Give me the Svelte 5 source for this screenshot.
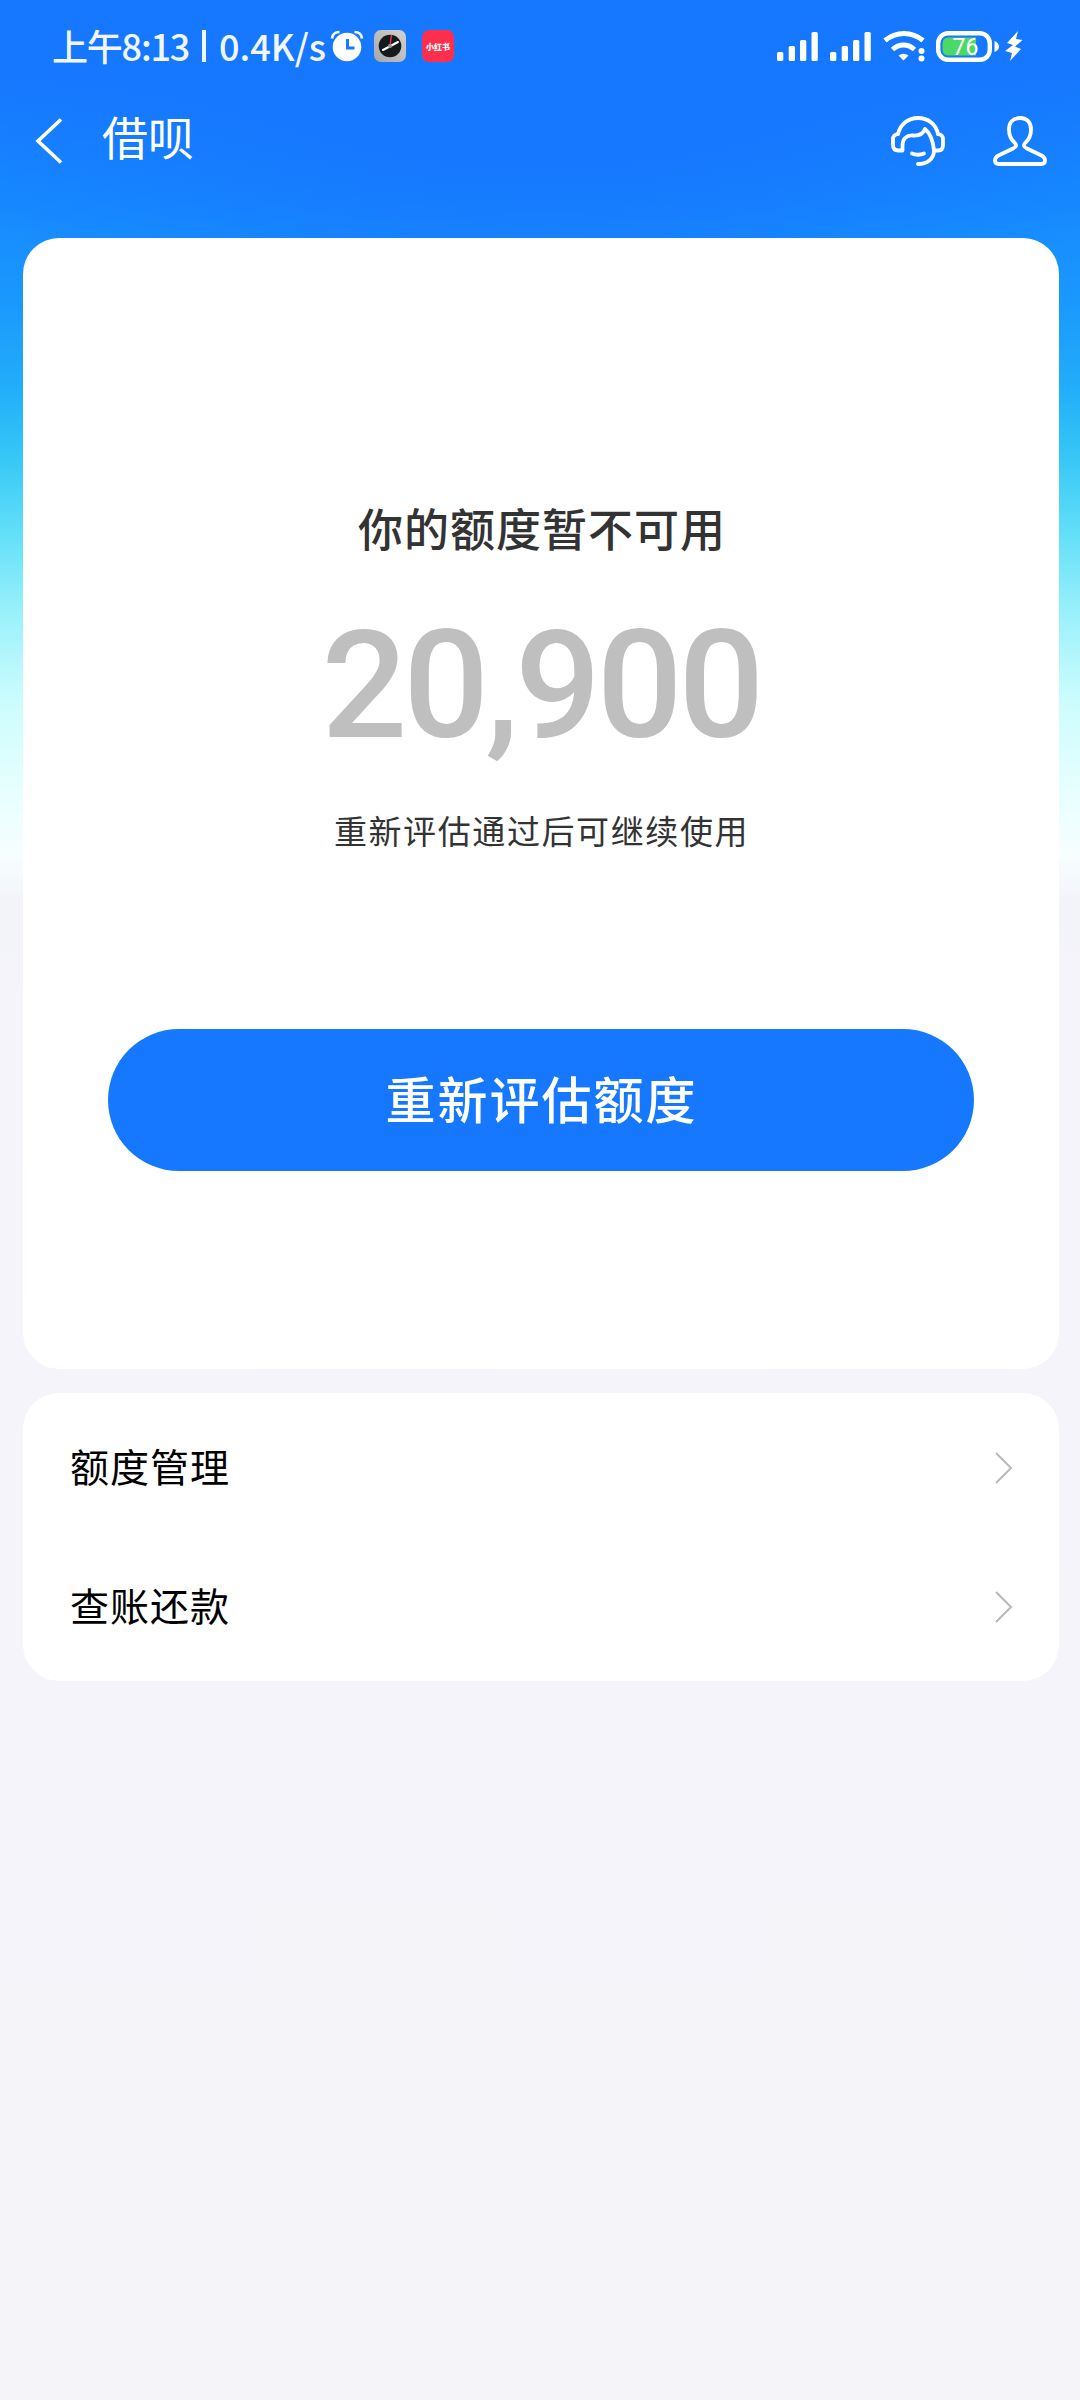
<script>
  const bars = [
    { x: 0, y: 20, h: 9 },
    { x: 11.7, y: 14, h: 15 },
    { x: 23, y: 8, h: 21 },
    { x: 34.5, y: 0, h: 29 }
  ];
  const rows = ['额度管理', '查账还款'];
</script>

<div class="screen">
  <div class="status">
    <span class="time">上午8:13</span>
    <span class="divider"></span>
    <span class="speed">0.4K/s</span>
    <svg class="alarm" width="34" height="32" viewBox="0 0 34 32">
      <circle cx="17" cy="17" r="14.3" fill="#fff" />
      <path d="M2 8.500C2.500 4 5.500 2 9.500 2M32 8.500C31.500 4 28.500 2 24.500 2" fill="none" stroke="#fff" stroke-width="2.600" />
      <path d="M17.500 9v9h7" fill="none" stroke="#1677ff" stroke-width="3" />
    </svg>
    <svg class="clock" width="32" height="32" viewBox="0 0 32 32">
      <defs>
        <linearGradient id="silver" x1="1" y1="0" x2="0" y2="1">
          <stop offset="0" stop-color="#d2d2d0" />
          <stop offset="0.500" stop-color="#bdbdbd" />
          <stop offset="1" stop-color="#a4a7aa" />
        </linearGradient>
      </defs>
      <rect width="32" height="32" rx="7" fill="url(#silver)" />
      <circle cx="16" cy="16" r="11.300" fill="#171a1c" />
      <path d="M16 16l1.500-11" stroke="#e23540" stroke-width="1.500" />
      <path d="M9 20L24 12" stroke="#fff" stroke-width="2" stroke-linecap="round" />
      <circle cx="16" cy="16" r="2" fill="#999" />
    </svg>
    <span class="red"><span>小红书</span></span>
    <div class="system">
      {#each [0, 1] as n (n)}
        <svg class="signal" width="41" height="29" viewBox="0 0 41 29">
          {#each bars as b (b.x)}
            <rect x={b.x} y={b.y} width="6.300" height={b.h} rx="1.500" fill="#fff" />
          {/each}
        </svg>
      {/each}
      <svg class="wifi" width="42" height="32" viewBox="0 0 42 32">
        <path d="M2 10.500C13 1 29 1 40 10.500" fill="none" stroke="#fff" stroke-width="5" />
        <path d="M9.500 19.500C16 13.500 25 13.500 31.500 19.500" fill="none" stroke="#fff" stroke-width="5" />
        <path d="M15.500 25.500Q20.500 22 25.500 25.500L20.500 30.500Z" fill="#fff" />
        <circle cx="38.500" cy="21" r="3" fill="#fff" />
        <circle cx="38.500" cy="28.500" r="3" fill="#fff" />
      </svg>
      <svg class="battery" width="64" height="31" viewBox="0 0 64 31">
        <rect x="2.200" y="2.200" width="51.600" height="26.600" rx="10" fill="none" stroke="#fff" stroke-width="4.400" />
        <path d="M12 6.500H40V24.500H12Q6.500 24.500 6.500 18V13Q6.500 6.500 12 6.500Z" fill="#4bd964" />
        <path d="M58.500 10Q63 12 63 15.500T58.500 21Z" fill="#fff" />
        <text x="29.500" y="24" text-anchor="middle" fill="#fff">76</text>
      </svg>
      <svg class="bolt" width="18" height="30" viewBox="0 0 18 30">
        <path d="M13 0L2 12L8 14L0 20L7 22L5 30L16 18L10 15.500L17.500 9L11 8Z" fill="#fff" />
      </svg>
    </div>
  </div>

  <header>
    <svg class="back" width="28" height="46" viewBox="0 0 28 46">
      <path d="M26 1.500L3 23L26 44.500" fill="none" stroke="#fff" stroke-width="3.600" />
    </svg>
    <h1>借呗</h1>
    <svg class="service" width="54" height="50" viewBox="0 0 54 50">
      <g fill="none" stroke="#fff" stroke-width="3.800" stroke-linecap="round" stroke-linejoin="round">
        <path d="M7 18C9.500 8 17 2 27 2S45 8 47 18" />
        <path d="M7 18C4 18.500 2 20 2 23V29C2 33 4 34.500 7.500 34.500H11.500V30C11.500 22 16 19 22 19.500C28 20 32 18 34 13C39 17 42 24 43 34.500H47C50.500 34.500 52 32.500 52 29V23C52 20 50 18.500 47 18" />
        <path d="M43 34.500C43 43 36 48 27 48" />
        <path d="M21 37.500Q27 40 33 37.500" />
      </g>
    </svg>
    <svg class="user" width="54" height="50" viewBox="0 0 54 50">
      <path d="M27 2C19.500 2 16 7 16 13.500C16 20 18 23.500 21.500 26.500C24 29 23.500 31 20 32.500L6.500 39C3 40.500 2 42 2 44.500C2 47 3.500 48 6 48H48C50.500 48 52 47 52 44.500C52 42 51 40.500 47.500 39L34 32.500C30.500 31 30 29 32.500 26.500C36 23.500 38 20 38 13.500C38 7 34.500 2 27 2Z" fill="none" stroke="#fff" stroke-width="3.800" stroke-linejoin="round" />
    </svg>
  </header>

  <main class="card">
    <h2>你的额度暂不可用</h2>
    <div class="amount">20,900</div>
    <p>重新评估通过后可继续使用</p>
    <button>重新评估额度</button>
  </main>

  <nav class="list">
    {#each rows as row (row)}
      <div class="row">
        <span>{row}</span>
        <svg width="18" height="32" viewBox="0 0 18 32">
          <path d="M1 1L16 16L1 31" fill="none" stroke="#b8b8b8" stroke-width="2" />
        </svg>
      </div>
    {/each}
  </nav>
</div>

<style>
  .screen {
    width: 1080px;
    height: 2400px;
    box-sizing: border-box;
    font-family: 'Noto Sans CJK SC', sans-serif;
    color: #333;
    background:
      radial-gradient(ellipse 700px 360px at 50% 0, #1677ff 40%, rgba(22, 119, 255, 0) 100%) no-repeat,
      linear-gradient(#1677ff 0, #1677ff 60px, #1689ff 200px, #1a98fd 300px, #22aefa 390px, #38c8f6 460px, #60def8 530px, #98f0fb 610px, #ccfcfd 700px, #e9ffff 800px, #f7fefe 855px, #f3f4fa 900px, #f4f4fa 1000px, #f4f4f9 2400px);
  }
  .status {
    height: 92px;
    display: flex;
    align-items: center;
    padding: 0 57px 0 52px;
    color: #f2f7ff;
    font-size: 36px;
    font-weight: 500;
    box-sizing: border-box;
  }
  .time, .speed {
    white-space: nowrap;
    line-height: 50px;
    padding-bottom: 3px;
  }
  .time {
    width: 138px;
    letter-spacing: -1.200px;
  }
  .divider {
    width: 4px;
    height: 32px;
    margin: 0 13px 0 12px;
    background: #f2f7ff;
  }
  .speed { width: 111px; }
  .clock { margin-left: 10px; }
  .red {
    width: 32px;
    height: 32px;
    margin-left: 16px;
    border-radius: 7px;
    background: #ff2e4d;
    color: #fff;
    display: flex;
    align-items: center;
    justify-content: center;
    font-size: 8px;
    font-weight: 900;
  }
  .red span { white-space: nowrap; }
  .system {
    margin-left: auto;
    display: flex;
    align-items: center;
  }
  .signal { margin-right: 12px; }
  .battery { margin: 0 5px 0 11px; }
  .battery text { font: 400 23px Roboto, sans-serif; }
  header {
    height: 98px;
    display: flex;
    align-items: center;
    padding: 0 33px 0 35px;
  }
  h1 {
    margin: -12px auto 0 39px;
    font-size: 46px;
    font-weight: 400;
    line-height: 60px;
    color: #fff;
  }
  .user { margin-left: 48px; }
  .card, .list {
    margin: 0 21px 0 23px;
    border-radius: 36px;
    background: #fff;
  }
  .card {
    margin-top: 48px;
    height: 1131px;
    display: flex;
    flex-direction: column;
    align-items: center;
  }
  h2 {
    margin: 257px 0 0;
    padding-left: 2px;
    font-size: 45px;
    line-height: 66px;
    font-weight: 500;
    letter-spacing: 1px;
  }
  .amount {
    margin-top: 40px;
    height: 170px;
    font: 500 151px/170px Roboto, sans-serif;
    letter-spacing: -4px;
    color: #bfbfbf;
  }
  p {
    margin: 35px 0 0;
    padding-left: 1px;
    font-size: 33px;
    line-height: 48px;
    letter-spacing: 1.600px;
  }
  button {
    width: 866px;
    height: 142px;
    margin: 175px 0 0;
    padding: 0 0 7px 1px;
    border: 0;
    border-radius: 71px;
    background: #1677ff;
    color: #fff;
    font: 500 50px/70px 'Noto Sans CJK SC', sans-serif;
    letter-spacing: 2px;
  }
  .list {
    margin-top: 24px;
    height: 288px;
    padding: 5px 46px 0 47px;
    box-sizing: border-box;
  }
  .row {
    height: 139px;
    display: flex;
    align-items: center;
    justify-content: space-between;
    color: #000;
    font-size: 39px;
    letter-spacing: 1px;
  }
  .row span { padding-bottom: 6px; }
</style>
